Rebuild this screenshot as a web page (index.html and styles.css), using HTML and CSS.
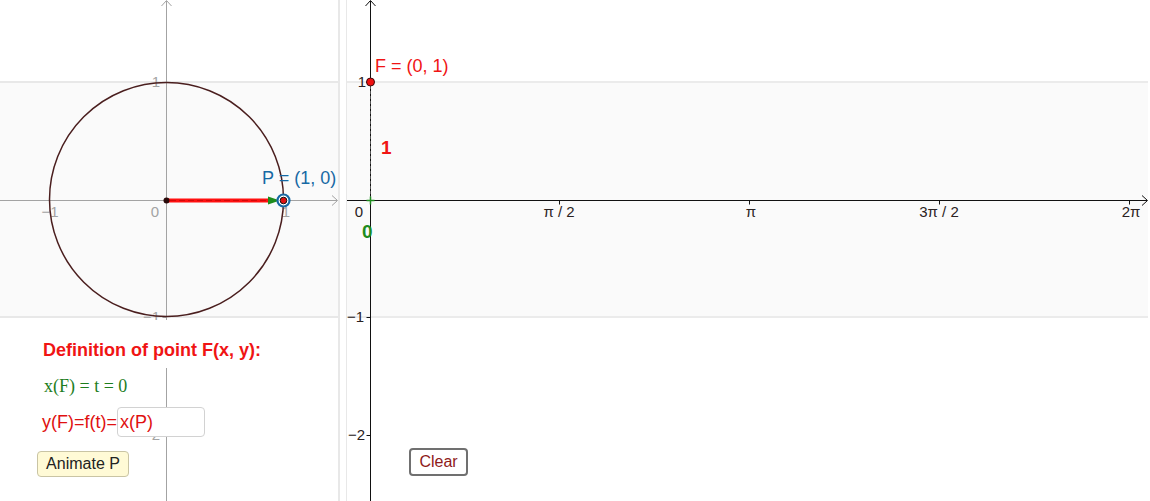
FILE: index.html
```html
<!DOCTYPE html>
<html lang="en">
<head>
<meta charset="utf-8">
<title>Definition of point F</title>
<link rel="stylesheet" href="styles.css">
</head>
<body>
<div class="applet">
  <section class="view view-left">
    <svg class="canvas" width="338" height="501" viewBox="0 0 338 501">
      <rect x="0" y="82" width="338" height="235" fill="#fafafa"/>
      <line x1="0" y1="82" x2="338" y2="82" stroke="#e8e8e8" stroke-width="2"/>
      <line x1="0" y1="317" x2="338" y2="317" stroke="#e8e8e8" stroke-width="2"/>
      <g stroke="#a3a3a3" fill="none" stroke-width="1">
        <line x1="0" y1="200.5" x2="337" y2="200.5"/>
        <polyline points="332,195.5 337.5,200.5 332,205.5"/>
        <line x1="166.5" y1="1" x2="166.5" y2="501"/>
        <polyline points="161.5,6 166.5,0.5 171.5,6"/>
        <line x1="49.5" y1="200.5" x2="49.5" y2="204.5"/>
        <line x1="283.5" y1="200.5" x2="283.5" y2="204.5"/>
        <line x1="162.5" y1="82.5" x2="166.5" y2="82.5"/>
        <line x1="162.5" y1="317.5" x2="166.5" y2="317.5"/>
        <line x1="162.5" y1="435.5" x2="166.5" y2="435.5"/>
      </g>
      <g class="lbl-gray">
        <text x="160" y="87" text-anchor="end">1</text>
        <text x="159" y="217" text-anchor="end">0</text>
        <text x="50" y="217" text-anchor="middle">−1</text>
        <text x="286" y="217" text-anchor="middle">1</text>
        <text x="160" y="322" text-anchor="end">−1</text>
        <text x="160" y="440" text-anchor="end">−2</text>
      </g>
      <circle cx="166.5" cy="199.5" r="117" fill="none" stroke="#4a1e1e" stroke-width="1.5"/>
      <line x1="166.5" y1="200.5" x2="272" y2="200.5" stroke="#ff1010" stroke-width="4"/>
      <line x1="170" y1="200.5" x2="270" y2="200.5" stroke="#a00000" stroke-width="1" stroke-dasharray="6 3" opacity="0.45"/>
      <polygon points="268,196.5 280,200.5 268,204.5" fill="#1e8c1e"/>
      <circle cx="166.5" cy="200.5" r="3" fill="#2a0a0a"/>
      <circle cx="283.5" cy="200.5" r="6" fill="#fff" stroke="#1769a4" stroke-width="2.2"/>
      <circle cx="283.5" cy="200.5" r="3.3" fill="#e01010" stroke="#111" stroke-width="1"/>
      <text class="lbl-p" x="262" y="184">P = (1, 0)</text>
    </svg>
    <div class="panel">
      <h2 class="def-title">Definition of point F(x, y):</h2>
      <p class="xdef">x(F) = t = 0</p>
      <div class="ydef">
        <span class="ydef-label">y(F)=f(t)=</span>
        <input class="ydef-input" type="text" value="x(P)">
      </div>
      <button class="btn-animate" type="button">Animate P</button>
    </div>
  </section>
  <div class="divider"></div>
  <section class="view view-right">
    <svg class="canvas" width="803" height="501" viewBox="0 0 803 501">
      <rect x="0" y="82" width="801" height="235" fill="#fafafa"/>
      <line x1="0" y1="82" x2="801" y2="82" stroke="#ebebeb" stroke-width="2"/>
      <line x1="0" y1="317" x2="801" y2="317" stroke="#ebebeb" stroke-width="2"/>
      <g stroke="#111" fill="none" stroke-width="1">
        <line x1="0" y1="200.5" x2="800" y2="200.5"/>
        <polyline points="795,195.5 800.5,200.5 795,205.5"/>
        <line x1="23.5" y1="1" x2="23.5" y2="501"/>
        <polyline points="18.5,6 23.5,0.5 28.5,6"/>
        <line x1="212.5" y1="200.5" x2="212.5" y2="204.5"/>
        <line x1="402.5" y1="200.5" x2="402.5" y2="204.5"/>
        <line x1="592.5" y1="200.5" x2="592.5" y2="204.5"/>
        <line x1="782.5" y1="200.5" x2="782.5" y2="204.5"/>
        <line x1="19.5" y1="82.5" x2="23.5" y2="82.5"/>
        <line x1="19.5" y1="317.5" x2="23.5" y2="317.5"/>
        <line x1="19.5" y1="435.5" x2="23.5" y2="435.5"/>
      </g>
      <g class="lbl-dark">
        <text x="16" y="217" text-anchor="end">0</text>
        <text x="212" y="217" text-anchor="middle">π / 2</text>
        <text x="404" y="217" text-anchor="middle">π</text>
        <text x="592" y="217" text-anchor="middle">3π / 2</text>
        <text x="784" y="217" text-anchor="middle">2π</text>
        <text x="19" y="87" text-anchor="end">1</text>
        <text x="17" y="322" text-anchor="end">−1</text>
        <text x="18" y="440" text-anchor="end">−2</text>
      </g>
      <line x1="23.5" y1="86" x2="23.5" y2="200" stroke="#555" stroke-width="1" stroke-dasharray="3 2"/>
      <circle cx="23.5" cy="82" r="4" fill="#f01010" stroke="#3a0a0a" stroke-width="1"/>
      <text class="lbl-f" x="28" y="72">F = (0, 1)</text>
      <text class="lbl-one" x="34" y="154">1</text>
      <g stroke="#1e8c1e" stroke-width="1.5">
        <line x1="19.5" y1="200.5" x2="27.5" y2="200.5"/>
        <line x1="23.5" y1="196.5" x2="23.5" y2="204.5"/>
      </g>
      <text class="lbl-zero" x="15" y="238">0</text>
    </svg>
    <div class="tools">
      <button class="btn-clear" type="button">Clear</button>
    </div>
  </section>
</div>
</body>
</html>
```
FILE: styles.css
```css
html, body {
  margin: 0;
  padding: 0;
  background: #fff;
}

body {
  font-family: "Liberation Sans", Arial, sans-serif;
}

.applet {
  display: flex;
  width: 1150px;
  height: 501px;
  overflow: hidden;
}

.view {
  display: grid;
  height: 501px;
}

.view > * {
  grid-area: 1 / 1;
}

.view-left {
  width: 338px;
}

.view-right {
  width: 803px;
}

.divider {
  width: 6px;
  height: 501px;
  border-left: 2px solid #e8e8e8;
  border-right: 1px solid #e8e8e8;
}

.canvas {
  display: block;
}

.lbl-gray text {
  font-family: "Liberation Sans", Arial, sans-serif;
  font-size: 15px;
  fill: #a3a3a3;
}

.lbl-dark text {
  font-family: "Liberation Sans", Arial, sans-serif;
  font-size: 15px;
  fill: #2a2222;
}

.lbl-p {
  font-family: "Liberation Sans", Arial, sans-serif;
  font-size: 18px;
  fill: #1769a4;
}

.lbl-f {
  font-family: "Liberation Sans", Arial, sans-serif;
  font-size: 18px;
  fill: #f01414;
}

.lbl-one {
  font-family: "Liberation Sans", Arial, sans-serif;
  font-size: 19px;
  font-weight: bold;
  fill: #f01414;
}

.lbl-zero {
  font-family: "Liberation Sans", Arial, sans-serif;
  font-size: 19px;
  font-weight: bold;
  fill: #1e8c1e;
}

.panel {
  align-self: start;
  justify-self: start;
  display: flex;
  flex-direction: column;
  align-items: flex-start;
  padding: 320px 0 0 37px;
}

.def-title {
  margin: 0;
  padding: 20px 6px 8px 6px;
  background: #fff;
  font-size: 18px;
  line-height: 20px;
  font-weight: bold;
  color: #f01414;
}

.xdef {
  margin: 8px 0 0 7px;
  font-family: "Liberation Serif", "Times New Roman", serif;
  font-size: 18px;
  line-height: 20px;
  color: #1e7e1e;
}

.ydef {
  display: flex;
  align-items: center;
  height: 30px;
  margin: 11px 0 0 5px;
}

.ydef-label {
  font-size: 18px;
  line-height: 20px;
  color: #e01010;
}

.ydef-input {
  box-sizing: border-box;
  width: 88px;
  height: 30px;
  margin: 0;
  padding: 0 2px;
  border: 1px solid #d2d2d2;
  border-radius: 4px;
  background: #fff;
  font-family: "Liberation Sans", Arial, sans-serif;
  font-size: 18px;
  color: #e01010;
  outline: none;
}

.btn-animate {
  box-sizing: border-box;
  width: 92px;
  height: 26px;
  margin-top: 14px;
  padding: 0;
  border: 1px solid #c9c4a4;
  border-radius: 4px;
  background: #fffad6;
  font-family: "Liberation Sans", Arial, sans-serif;
  font-size: 16px;
  color: #222;
}

.tools {
  align-self: start;
  justify-self: start;
  padding: 448px 0 0 62px;
}

.btn-clear {
  box-sizing: border-box;
  width: 59px;
  height: 28px;
  padding: 0;
  border: 2px solid #707070;
  border-radius: 4px;
  background: #fff;
  font-family: "Liberation Sans", Arial, sans-serif;
  font-size: 16px;
  color: #8e1a1a;
}
```
